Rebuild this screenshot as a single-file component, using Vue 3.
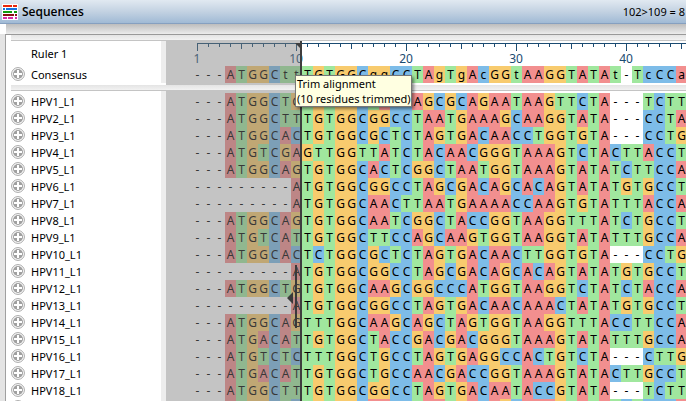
<template>
  <div class="viewer">
    <header class="title-bar">
      <svg class="logo" viewBox="0 0 16 16" aria-hidden="true">
        <rect width="16" height="16" fill="#fff" />
        <path d="M1 2h9M11 2h4" stroke="#e8280c" stroke-width="2" />
        <path d="M1 5h2M4 5h11" stroke="#1673e0" stroke-width="2" />
        <path d="M1 8h9M12 8h3" stroke="#0f9d0f" stroke-width="2" />
        <path d="M1 11h11M13 11h2" stroke="#8a1010" stroke-width="2" />
        <path d="M1 14h4M6 14h5M13 14h2" stroke="#d62fa5" stroke-width="2" />
      </svg>
      <h1>Sequences</h1>
      <span class="selection">102&gt;109 = 8</span>
    </header>
    <div class="shade"></div>

    <main class="panes">
      <div class="bar top"></div>

      <!-- Ruler and consensus -->
      <div class="pane head">
        <table>
          <tbody>
            <tr class="ruler-row">
              <th scope="row"><span class="name">Ruler 1</span></th>
              <td>
                <svg class="ruler" width="506" height="25">
                  <path :d="rulerPath" />
                  <text v-for="n in labels" :key="n" :x="tickX(n)" y="22">{{ n }}</text>
                </svg>
              </td>
            </tr>
            <tr>
              <th scope="row">
                <button class="expand" aria-label="Expand Consensus">
                  <svg viewBox="0 0 14 14">
                    <circle cx="7" cy="7" r="6.4" />
                    <circle class="disc" cx="7" cy="7" r="5" />
                    <path d="M7 3v8M3 7h8" />
                  </svg>
                </button>
                <span class="name">Consensus</span>
              </th>
              <td>
                <div class="track">
                  <span v-for="(r, i) in consensus" :key="i" :class="residueClass(r)">{{ r }}</span>
                </div>
              </td>
            </tr>
          </tbody>
        </table>
        <div class="trimmed">
          <svg class="handle" viewBox="0 0 5 5"><path d="M0 0h5v5z" /></svg>
        </div>
      </div>

      <div class="bar"></div>

      <!-- Aligned sequences -->
      <div class="pane body">
        <table>
          <tbody>
            <tr v-for="seq in sequences" :key="seq.name">
              <th scope="row">
                <button class="expand" :aria-label="'Expand ' + seq.name">
                  <svg viewBox="0 0 14 14">
                    <circle cx="7" cy="7" r="6.4" />
                    <circle class="disc" cx="7" cy="7" r="5" />
                    <path d="M7 3v8M3 7h8" />
                  </svg>
                </button>
                <span class="name">{{ seq.name }}</span>
              </th>
              <td>
                <div class="track">
                  <span v-for="(r, i) in seq.residues" :key="i" :class="residueClass(r)">{{ r }}</span>
                </div>
              </td>
            </tr>
          </tbody>
        </table>
        <div class="trimmed"></div>
        <svg class="drag-cursor" viewBox="0 0 10 63" aria-hidden="true">
          <path d="M0 33l6-6v12zM8 0h2v63h-2z" />
        </svg>
        <div class="tooltip" role="tooltip">Trim alignment<br />(10 residues trimmed)</div>
      </div>
    </main>
  </div>
</template>

<script setup>
const consensus = '---ATGGCttTGTGGCggCCTAgTgAcGGtAAGGTATAt-TcCCa'

const rows = [
  '---ATGGCTGTGTGGCTACCAGCGCAGAATAAGTTCTA---TCTT',
  '---ATGGCTTTGTGGCGGCCTAATGAAAGCAAGGTATA---CCTA',
  '---ATGGCACTGTGGCGCTCTAGTGACAACCTGGTGTA---CCTG',
  '---ATGTCGAGTTGGTTATCTACAACGGGTAAAGTCTACTTACCT',
  '---ATGGCAGTGTGGCACTCGGCTAATGGTAAAGTATATCTTCCA',
  '---------ATGTGGCGGCCTAGCGACAGCACAGTATATGTGCCT',
  '---------ATGTGGCAACTTAATGAAAACCAAGTGTATTTACCA',
  '---ATGGCAGTGTGGCAATCGGCTACCGGTAAGGTTTATCTGCCT',
  '---ATGTCATTGTGGCTTCCAGCAAGTGGTAAGGTATATTTGCCA',
  '---ATGGCACTCTGGCGCTCTAGTGACAACTTGGTGTA---CCTG',
  '---------ATGTGGCGGCCTAGCGACAGCACAGTATATGTGCCT',
  '---ATGGCTGTGTGGCAAGCGGCCCATGGTAAGGTCTATCTACCA',
  '---------ATGTGGCGGCCTAGTGACAACAAACTATATGTGCCT',
  '---ATGGCAGTTTGGCAAGCAGCTAGTGGTAAGGTTTACCTTCCA',
  '---ATGACATTGTGGCTACCGACGACGGGTAAAGTATATTTGCCA',
  '---ATGTCTCTTTGGCTGCCTAGTGAGGCCACTGTCTA---CTTG',
  '---ATGACATTGTGGCTGCCAACGACCGGTAAAGTATACTTGCCT',
  '---ATGGCTTTGTGGCGGCCTAGTGACAATACCGTATA---TCTT',
  '---ATGGCTCTGTGGCAACCTAATGACAGCAAAGTATATCTCCCA'
]

const sequences = rows.map((residues, i) => ({ name: `HPV${i + 1}_L1`, residues }))

const residueClass = (r) => (r === '-' ? 'gap' : r.toLowerCase())

// Ruler geometry: one column is 11px wide, ticks sit in its middle
const labels = [1, 10, 20, 30, 40]
const tickX = (n) => (n - 1) * 11 + 5

let rulerPath = 'M5 2H506V3H5z'
for (let n = 1; n <= 46; n++) {
  const length = n === 1 || n % 10 === 0 ? 8 : n % 5 === 0 ? 6 : 4
  rulerPath += `M${tickX(n)} 2h1v${length}h-1z`
}
</script>

<style>
body {
  margin: 0;
}
</style>

<style scoped>
.viewer {
  display: flex;
  flex-direction: column;
  height: 100vh;
  overflow: hidden;
  background: #fff;
  color: #000;
  font-family: "Noto Sans", sans-serif;
  font-size: 11px;
}

.title-bar {
  display: flex;
  flex: none;
  align-items: center;
  height: 23px;
  padding: 0 1px 0 2px;
  background: linear-gradient(#e1e9f1, #c3d2e2 50%, #a0bad5);
  border-bottom: 1px solid #86a0c0;
}

.logo {
  width: 16px;
  height: 16px;
}

.title-bar h1 {
  flex: 1;
  margin: 0 0 0 4px;
  font-family: "Open Sans", sans-serif;
  font-size: 12px;
  font-weight: 600;
}

.shade {
  flex: none;
  height: 10px;
  margin-left: 6px;
  background: linear-gradient(#bdbdbd, #ececec);
}

.panes {
  display: flex;
  flex: 1;
  flex-direction: column;
  min-height: 0;
  padding-left: 5px;
  margin-left: 5px;
  border-left: 1px solid #a0a0a0;
  border-top: 1px solid #999;
  box-shadow: -5px 0 0 #e4e4e4;
}

.bar {
  flex: none;
  height: 5px;
  background: linear-gradient(#e4e4e4, #f2f2f2);
  border-bottom: 1px solid #c4c4c4;
}

.pane {
  position: relative;
}

.head {
  flex: none;
  height: 44px;
}

.body {
  flex: 1;
}

table {
  width: 100%;
  border-collapse: separate;
  border-spacing: 0;
}

.body table {
  padding-top: 2px;
  background: linear-gradient(#ededed, #ededed) 150px 0 / 5px 2px no-repeat;
}

th,
td {
  height: 17px;
  padding: 0;
}

.ruler-row th,
.ruler-row td {
  height: 25px;
}

th {
  width: 150px;
  border-right: 5px solid #ededed;
  font-weight: normal;
  text-align: left;
  line-height: 17px;
  white-space: nowrap;
}

td {
  overflow: hidden;
  max-width: 0;
  padding-left: 26px;
}

.expand {
  width: 14px;
  height: 14px;
  padding: 0;
  border: 0;
  background: none;
  vertical-align: top;
  margin-top: 1px;
}

.expand svg {
  display: block;
  fill: none;
  stroke: #a6a6a6;
}

.expand .disc {
  fill: #a0a0a0;
  stroke: none;
}

.expand path {
  stroke: #fff;
  stroke-width: 2;
}

.name {
  margin-left: 6px;
}

.ruler-row .name {
  margin-left: 20px;
}

.ruler {
  display: block;
  fill: #1b4b72;
  font-size: 12px;
  text-anchor: middle;
}

.track {
  display: flex;
  height: 17px;
}

.track span {
  flex: none;
  width: 11px;
  font-size: 12px;
  line-height: 17px;
  text-align: center;
}

.a {
  background: #f28f8f;
}

.t {
  background: #a0e79e;
}

.g {
  background: #f8cb6e;
}

.c {
  background: #7dbce8;
}

/* Shaded region left of the trim position */
.trimmed {
  position: absolute;
  top: 0;
  bottom: 0;
  left: 155px;
  width: 134px;
  background: rgba(124, 124, 124, 0.45);
  border-right: 2px solid #3e3e3e;
}

.handle {
  position: absolute;
  top: 2px;
  right: 0;
  width: 5px;
  height: 5px;
  fill: #3e3e3e;
}

.drag-cursor {
  position: absolute;
  top: 174px;
  left: 276px;
  width: 10px;
  height: 63px;
  fill: #3a3a3a;
}

.tooltip {
  position: absolute;
  top: -16px;
  left: 284px;
  padding: 0 1px;
  border: 1px solid #777;
  background: #ffffe1;
  box-shadow: 2px 2px 3px rgba(0, 0, 0, 0.45);
  line-height: 15px;
  white-space: nowrap;
}
</style>
